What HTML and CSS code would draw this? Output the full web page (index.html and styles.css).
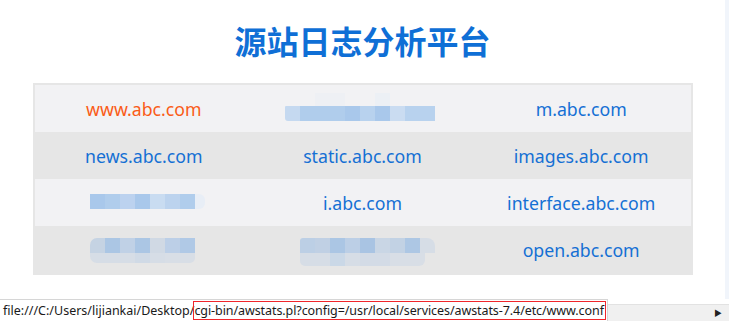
FILE: index.html
```html
<!DOCTYPE html>
<html lang="zh-CN">
<head>
<meta charset="utf-8">
<title>源站日志分析平台</title>
<link rel="stylesheet" href="styles.css">
</head>
<body>
<div class="window">
  <div class="viewport">
    <main class="page">
      <h1 class="title">源站日志分析平台</h1>
      <div class="sites">
        <div class="cell odd"><a class="link hot" href="#">www.abc.com</a></div>
        <div class="cell odd"><div class="mosaic m-a"><div class="m-a-top"></div><div class="m-a-bar"></div></div></div>
        <div class="cell odd"><a class="link" href="#">m.abc.com</a></div>

        <div class="cell even"><a class="link" href="#">news.abc.com</a></div>
        <div class="cell even"><a class="link" href="#">static.abc.com</a></div>
        <div class="cell even"><a class="link" href="#">images.abc.com</a></div>

        <div class="cell odd"><div class="mosaic m-b"></div></div>
        <div class="cell odd"><a class="link" href="#">i.abc.com</a></div>
        <div class="cell odd"><a class="link" href="#">interface.abc.com</a></div>

        <div class="cell even"><div class="mosaic m-c"><div class="m-c-top"></div><div class="m-c-bot"></div></div></div>
        <div class="cell even"><div class="mosaic m-d"><div class="m-d-top"></div><div class="m-d-bot"></div></div></div>
        <div class="cell even"><a class="link" href="#">open.abc.com</a></div>
      </div>
    </main>
    <div class="edge"></div>
  </div>
  <div class="statusbar">
    <div class="status-url">file:///C:/Users/lijiankai/Desktop/<span class="mark">cgi-bin/awstats.pl?config=/usr/local/services/awstats-7.4/etc/www.conf</span></div>
    <div class="status-rest"><span class="arrow">&#9654;</span></div>
  </div>
</div>
</body>
</html>
```
FILE: styles.css
```css
html, body {
  margin: 0;
  padding: 0;
  background: #ffffff;
}
.window {
  width: 729px;
  height: 321px;
  display: flex;
  flex-direction: column;
  overflow: hidden;
  font-family: "Noto Sans", "Noto Sans CJK SC", sans-serif;
}
.viewport {
  flex: 1;
  display: flex;
  min-height: 0;
}
.page {
  flex: 1;
  padding-top: 18px;
}
.edge {
  width: 4px;
  background: #f1f5fb;
}
.title {
  margin: 0;
  text-align: center;
  font-family: "Noto Sans CJK SC", sans-serif;
  font-size: 32px;
  font-weight: 700;
  line-height: 44px;
  color: #0f6fd6;
}
.sites {
  width: 656px;
  margin: 21px auto 0;
  border: 2px solid #e6e6e6;
  display: grid;
  grid-template-columns: repeat(3, 1fr);
  grid-auto-rows: 47px;
}
.cell {
  display: flex;
  align-items: center;
  justify-content: center;
}
.cell.odd { background: #f2f2f4; }
.cell.even { background: #e6e6e6; }
.link {
  font-size: 17.7px;
  color: #1570d4;
  text-decoration: none;
}
.link.hot { color: #fa5c17; }

.mosaic { display: flex; flex-direction: column; }
.m-a { width: 150px; margin-left: -5px; margin-top: -4px; }
.m-a-top {
  height: 13px;
  margin-left: 30px;
  width: 75px;
  background: linear-gradient(to right, #eef0f4 0 30px, transparent 30px 60px, #ecf0f5 60px 75px);
}
.m-a-bar {
  height: 15px;
  border-radius: 1px 0 0 3px;
  background: linear-gradient(to right,
    #c5d9f0 0 15px, #b0cdec 15px 60px, #a9c8eb 60px 75px, #b8d2ee 75px 90px,
    #a9c8eb 90px 105px, #cadcf1 105px 120px, #b8d2ee 120px 150px);
}
.m-b {
  width: 115px;
  height: 15px;
  margin-left: 8px;
  margin-top: -2px;
  border-radius: 0 6px 6px 0;
  background: linear-gradient(to right,
    #a9c8eb 0 15px, #b0cdec 15px 30px, #bcd2ef 30px 45px, #a9c8eb 45px 60px,
    #c9dcf1 60px 75px, #bcd3ee 75px 90px, #b0cdec 90px 105px, #e8eef6 105px 115px);
}
.m-c { width: 105px; margin-left: -2px; margin-top: 2px; }
.m-c-top {
  height: 15px;
  border-radius: 7px 0 0 0;
  background: linear-gradient(to right,
    #c5d3e3 0 15px, #abc6e4 15px 30px, #c0d1e6 30px 45px, #abc6e4 45px 60px,
    #d0d9e4 60px 75px, #bccfe7 75px 90px, #b0c9e6 90px 105px);
}
.m-c-bot {
  height: 10px;
  border-radius: 0 0 5px 7px;
  background: linear-gradient(to right,
    #d6dde6 0 45px, #d0dae6 45px 60px, #d6dde6 60px 75px, #d8dee6 75px 105px);
}
.m-d { width: 135px; margin-left: 10px; margin-top: 4px; }
.m-d-top {
  height: 15px;
  border-radius: 3px 8px 0 0;
  background: linear-gradient(to right,
    #bccfe5 0 15px, #c0d0e4 15px 30px, #abc6e4 30px 45px, #bccfe6 45px 60px,
    #a9c4e3 60px 75px, #c9d6e5 75px 90px, #c2d2e4 90px 105px, #adc7e4 105px 120px,
    #d6dde6 120px 135px);
}
.m-d-bot {
  height: 13px;
  width: 125px;
  border-radius: 0 0 6px 5px;
  background: linear-gradient(to right,
    #d6dde6 0 30px, #cad8e7 30px 45px, #d6dde6 45px 60px, #d3dbe6 60px 90px, #d8dee6 90px 125px);
}

.statusbar {
  height: 22px;
  display: flex;
  flex-shrink: 0;
}
.status-url {
  width: 608px;
  box-sizing: border-box;
  border-top: 1px solid #d6d6d6;
  border-right: 1px solid #d6d6d6;
  background: #ffffff;
  font-size: 12.5px;
  line-height: 18px;
  color: #1a1a1a;
  padding: 2px 0 0 3px;
  white-space: nowrap;
  overflow: hidden;
}
.mark {
  border: 1px solid #f0262b;
  margin-left: -1px;
  padding: 0 1px 0 0;
  letter-spacing: -0.08px;
}
.status-rest {
  flex: 1;
  margin-top: 5px;
  background: #f0f0f0;
  border-top: 1px solid #e2e2e2;
  display: flex;
  justify-content: flex-end;
  align-items: center;
  padding-right: 7px;
}
.arrow {
  font-size: 8px;
  color: #222;
  line-height: 1;
}
```
